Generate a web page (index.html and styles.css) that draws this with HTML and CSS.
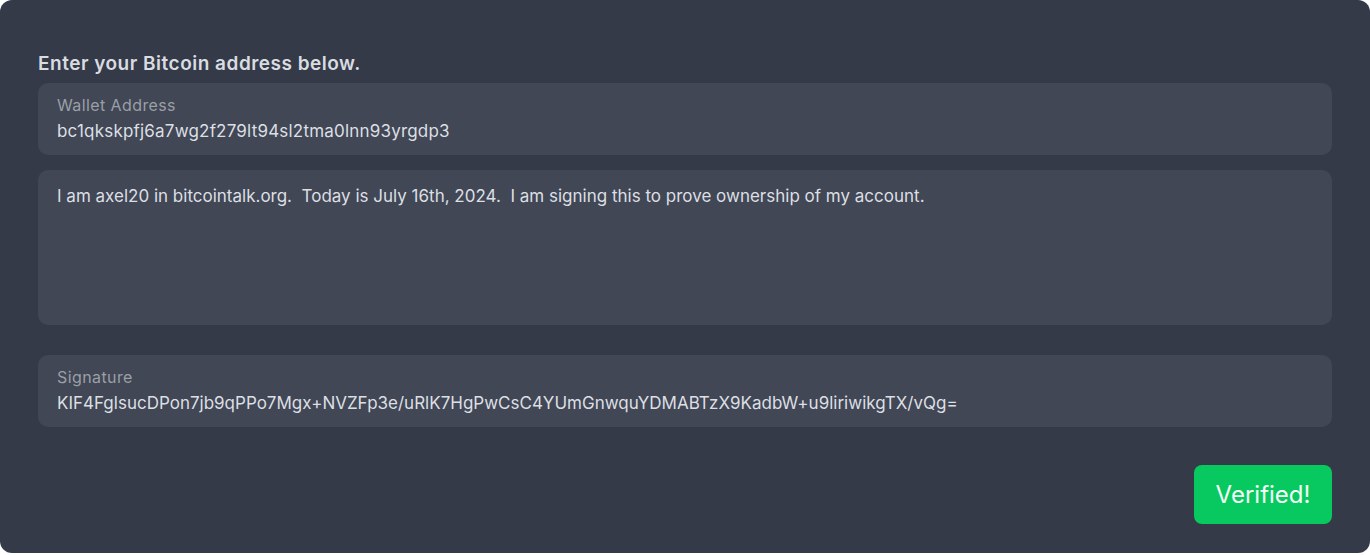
FILE: index.html
```html
<!DOCTYPE html>
<html>
<head>
<meta charset="utf-8">
<link rel="stylesheet" href="styles.css">
</head>
<body>
<div class="panel">
  <h2 class="heading">Enter your Bitcoin address below.</h2>
  <div class="field address">
    <div class="label">Wallet Address</div>
    <div class="value">bc1qkskpfj6a7wg2f279lt94sl2tma0lnn93yrgdp3</div>
  </div>
  <div class="field message">
    <div class="value">I am axel20 in bitcointalk.org.&nbsp; Today is July 16th, 2024.&nbsp; I am signing this to prove ownership of my account.</div>
  </div>
  <div class="field signature">
    <div class="label">Signature</div>
    <div class="value">KIF4FglsucDPon7jb9qPPo7Mgx+NVZFp3e/uRlK7HgPwCsC4YUmGnwquYDMABTzX9KadbW+u9liriwikgTX/vQg=</div>
  </div>
  <div class="actions">
    <button class="verified">Verified!</button>
  </div>
</div>
</body>
</html>
```
FILE: styles.css
```css
html, body {
  margin: 0;
  padding: 0;
  background: #ffffff;
}
body {
  font-family: "Inter", "Noto Sans", sans-serif;
}
.panel {
  box-sizing: border-box;
  width: 1370px;
  height: 553px;
  background: #343a47;
  border-radius: 12px;
  padding: 52px 38px 0 38px;
  display: flex;
  flex-direction: column;
}
.heading {
  margin: 0 0 7px 0;
  font-size: 19px;
  line-height: 24px;
  font-weight: 600;
  letter-spacing: 0.5px;
  color: #d9dce1;
}
.field {
  box-sizing: border-box;
  background: #414754;
  border-radius: 10px;
  padding: 12px 19px;
  display: flex;
  flex-direction: column;
  gap: 4px;
}
.address {
  height: 72px;
}
.message {
  margin-top: 15px;
  height: 155px;
  padding-top: 14px;
}
.signature {
  margin-top: 30px;
  height: 72px;
}
.label {
  font-size: 16px;
  line-height: 20px;
  letter-spacing: 0.4px;
  color: #9a9fa8;
}
.value {
  font-size: 17px;
  line-height: 24px;
  color: #dcdfe4;
}
.address .value {
  letter-spacing: 0.2px;
}
.actions {
  margin-top: 38px;
  display: flex;
  justify-content: flex-end;
}
.verified {
  width: 138px;
  height: 59px;
  border: none;
  border-radius: 8px;
  background: #08c95f;
  color: #f4fff8;
  font-family: "Inter", "Noto Sans", sans-serif;
  font-size: 24px;
  font-weight: 400;
  padding: 0;
}
```
